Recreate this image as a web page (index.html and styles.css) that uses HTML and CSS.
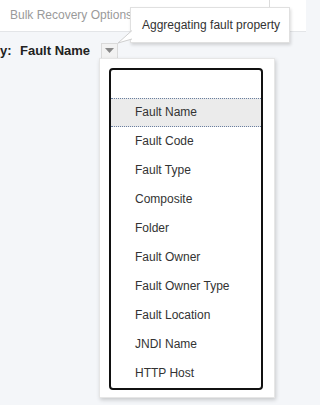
FILE: index.html
```html
<!DOCTYPE html>
<html>
<head>
<meta charset="utf-8">
<link rel="stylesheet" href="styles.css">
</head>
<body>
<div class="page">
  <div class="tabbar">
    <span class="tab">Bulk Recovery Options</span>
    <span class="sep"></span>
  </div>
  <div class="content">
    <div class="row">
      <span class="label">y:</span>
      <span class="value">Fault Name</span>
      <span class="btn"><svg width="9" height="5" viewBox="0 0 9 5"><path d="M0 0H9L4.5 5Z" fill="#888"/></svg></span>
    </div>
  </div>

  <div class="tooltip">
    Aggregating fault property
    <svg class="tail" width="16" height="14" viewBox="0 0 16 14"><path d="M15 0.5 L1 13 L15 9" fill="#fff" stroke="#cfcfcf" stroke-width="1"/></svg>
  </div>

  <div class="popup">
    <div class="list">
      <div class="blank"></div>
      <div class="item selected">Fault Name</div>
      <div class="item">Fault Code</div>
      <div class="item">Fault Type</div>
      <div class="item">Composite</div>
      <div class="item">Folder</div>
      <div class="item">Fault Owner</div>
      <div class="item">Fault Owner Type</div>
      <div class="item">Fault Location</div>
      <div class="item">JNDI Name</div>
      <div class="item">HTTP Host</div>
    </div>
  </div>
</div>
</body>
</html>
```

FILE: styles.css
```css
html, body {
  margin: 0;
  padding: 0;
}
body {
  font-family: "Liberation Sans", Arial, sans-serif;
  width: 306px;
  height: 405px;
  overflow: hidden;
  background: #f4f6f9;
}
.page {
  position: relative;
  width: 306px;
  height: 405px;
}
.tabbar {
  height: 32px;
  background: #fff;
  border-bottom: 1px solid #e3e5e8;
  display: flex;
  align-items: flex-start;
  box-sizing: border-box;
}
.tab {
  font-size: 12px;
  color: #9a9a9a;
  padding-left: 10px;
  line-height: 30px;
}
.sep {
  width: 1px;
  height: 11px;
  background: #dcdcdc;
  margin-left: 137px;
}
.content {
  padding-top: 10px;
}
.row {
  display: flex;
  align-items: center;
  height: 17px;
}
.label {
  font-weight: bold;
  font-size: 13px;
  color: #222;
  width: 20px;
}
.value {
  font-weight: bold;
  font-size: 13px;
  color: #222;
}
.btn {
  margin-left: 11px;
  width: 15px;
  height: 14px;
  border: 1px solid #dadada;
  background: #f2f2f2;
  display: flex;
  align-items: center;
  justify-content: center;
}
.tooltip {
  position: absolute;
  left: 130px;
  top: 7px;
  width: 160px;
  height: 36px;
  box-sizing: border-box;
  background: #fff;
  border: 1px solid #e0e0e0;
  box-shadow: 1px 2px 3px rgba(0,0,0,0.15);
  font-size: 12px;
  color: #333;
  padding-left: 11px;
  line-height: 34px;
}
.tail {
  position: absolute;
  left: -14px;
  top: 22px;
}
.popup {
  position: absolute;
  left: 99px;
  top: 58px;
  width: 176px;
  height: 340px;
  background: #fff;
  box-shadow: 1px 2px 4px rgba(0,0,0,0.18);
  border: 1px solid #e6e6e6;
  box-sizing: border-box;
  padding: 9px 11px 0 9px;
}
.list {
  border: 2px solid #111;
  border-radius: 4px;
  background: #fff;
}
.blank {
  height: 28px;
}
.item {
  height: 29px;
  line-height: 29px;
  font-size: 12px;
  color: #333;
  padding-left: 24px;
}
.item.selected {
  background: #ebebeb;
  border-top: 1px dotted #6a7fa0;
  border-bottom: 1px dotted #6a7fa0;
  height: 27px;
  line-height: 27px;
}
```
